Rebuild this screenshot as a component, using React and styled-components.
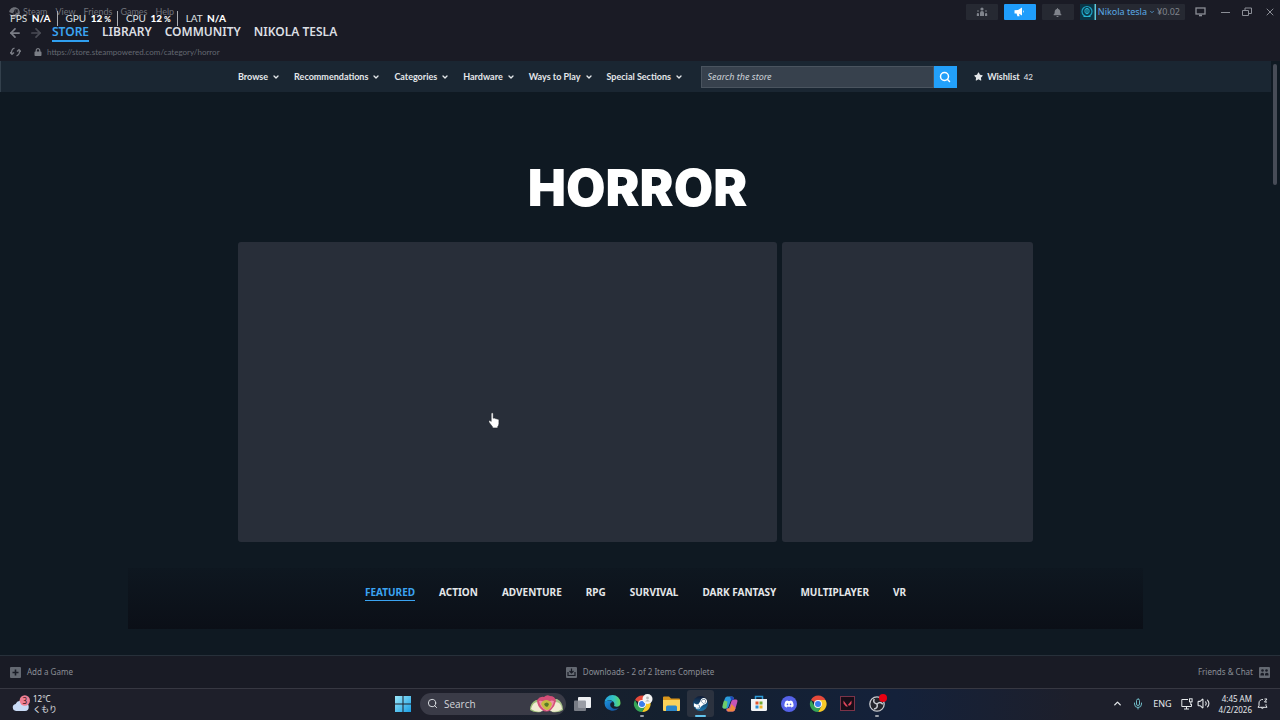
import React, { useState } from 'react';
import styled, { createGlobalStyle } from 'styled-components';
import { FaSteam, FaSteamSymbol, FaDiscord, FaStar, FaBell, FaBullhorn, FaLock } from 'react-icons/fa';
import { ArrowLeft, ArrowRight, ChevronDown, ChevronUp, Mic, Search, Volume2, X } from 'lucide-react';

const menus = ['Steam', 'View', 'Friends', 'Games', 'Help'];
const sections = ['STORE', 'LIBRARY', 'COMMUNITY', 'NIKOLA TESLA'];
const storeMenus = ['Browse', 'Recommendations', 'Categories', 'Hardware', 'Ways to Play', 'Special Sections'];
const tags = ['FEATURED', 'ACTION', 'ADVENTURE', 'RPG', 'SURVIVAL', 'DARK FANTASY', 'MULTIPLAYER', 'VR'];
const stats = [['FPS', 'N/A'], ['GPU', '12', '%'], ['CPU', '12', '%'], ['LAT', 'N/A']];

export default function App() {
  const [section, setSection] = useState('STORE');
  const [tag, setTag] = useState('FEATURED');
  const [query, setQuery] = useState('');

  return (
    <Page>
      <GlobalStyle />
      <Header>
        <TitleBar>
          <FaSteam size={11} />
          {menus.map(name => (
            <MenuButton key={name}>{name}</MenuButton>
          ))}
          <Account>
            <Chip aria-label="Friend activity"><PeopleIcon /></Chip>
            <Chip $active aria-label="Announcements"><MegaphoneIcon /></Chip>
            <Chip aria-label="Notifications"><FaBell size={9} /></Chip>
            <Profile>
              <Avatar />
              Nikola tesla
              <ChevronDown size={6} strokeWidth={3} />
              <span>¥0.02</span>
            </Profile>
          </Account>
          <WindowButtons>
            <IconButton aria-label="Big Picture"><DisplayIcon /></IconButton>
            <IconButton aria-label="Minimize"><MinimizeIcon /></IconButton>
            <IconButton aria-label="Restore"><RestoreIcon /></IconButton>
            <IconButton aria-label="Close"><X size={12} strokeWidth={2} /></IconButton>
          </WindowButtons>
        </TitleBar>
        <Sections>
          <IconButton aria-label="Back"><ArrowLeft size={14} strokeWidth={3} /></IconButton>
          <IconButton aria-label="Forward" $dim><ArrowRight size={14} strokeWidth={3} /></IconButton>
          {sections.map(name => (
            <SectionLink key={name} href="#" $active={name === section} onClick={() => setSection(name)}>
              {name}
            </SectionLink>
          ))}
        </Sections>
        <AddressBar>
          <IconButton aria-label="Reload"><ReloadIcon /></IconButton>
          <FaLock size={8} />
          <span>https://store.steampowered.com/category/horror</span>
        </AddressBar>
      </Header>

      <Store>
        <StoreBar>
          <StoreNav>
            <StoreMenus>
              {storeMenus.map(name => (
                <StoreMenu key={name}>
                  {name}
                  <ChevronDown size={8} strokeWidth={4} />
                </StoreMenu>
              ))}
            </StoreMenus>
            <SearchForm onSubmit={e => e.preventDefault()}>
              <input
                aria-label="Search the store"
                placeholder="Search the store"
                value={query}
                onChange={e => setQuery(e.target.value)}
              />
              <button aria-label="Search"><Search size={12} strokeWidth={3} /></button>
            </SearchForm>
            <Wishlist href="#">
              <FaStar size={9} />
              Wishlist <small>42</small>
            </Wishlist>
          </StoreNav>
        </StoreBar>
        <Title>HORROR</Title>
        <Capsules>
          <Capsule />
          <Capsule />
        </Capsules>
        <Tags>
          {tags.map(name => (
            <Tag key={name} $active={name === tag} onClick={() => setTag(name)}>{name}</Tag>
          ))}
        </Tags>
      </Store>
      <ScrollThumb />

      <Footer>
        <FooterButton><AddIcon />Add a Game</FooterButton>
        <FooterButton><DownloadIcon />Downloads - 2 of 2 Items Complete</FooterButton>
        <FooterButton>Friends &amp; Chat<ChatIcon /></FooterButton>
      </Footer>

      <Taskbar>
        <Weather>
          <WeatherIcon />
          <span>12°C<br />くもり</span>
        </Weather>
        <Apps>
          <AppButton aria-label="Start"><WindowsIcon /></AppButton>
          <TaskSearch>
            <Search size={11} />
            <input aria-label="Search Windows" placeholder="Search" />
            <LotusIcon />
          </TaskSearch>
          <AppButton aria-label="Task view"><TaskViewIcon /></AppButton>
          <AppButton aria-label="Edge"><EdgeIcon /></AppButton>
          <AppButton aria-label="Chrome profile" $running><ChromeIcon badge /></AppButton>
          <AppButton aria-label="File Explorer"><FolderIcon /></AppButton>
          <AppButton aria-label="Steam" $focused><SteamBall><FaSteamSymbol size={15} /></SteamBall></AppButton>
          <AppButton aria-label="Copilot"><CopilotIcon /></AppButton>
          <AppButton aria-label="Microsoft Store"><StoreIcon /></AppButton>
          <AppButton aria-label="Discord"><DiscordBall><FaDiscord size={10} /></DiscordBall></AppButton>
          <AppButton aria-label="Chrome"><ChromeIcon /></AppButton>
          <AppButton aria-label="Valorant"><ValorantIcon /></AppButton>
          <AppButton aria-label="OBS Studio" $running><ObsIcon /><RecordDot /></AppButton>
        </Apps>
        <Tray>
          <IconButton aria-label="Show hidden icons"><ChevronUp size={11} strokeWidth={3} /></IconButton>
          <MicButton aria-label="Microphone"><Mic size={12} /></MicButton>
          <span>ENG</span>
          <TrayGroup aria-label="Network and volume"><NetworkIcon /><Volume2 size={13} /></TrayGroup>
          <Clock>
            <time>4:45 AM<br />4/2/2026</time>
            <BellIcon />
          </Clock>
        </Tray>
      </Taskbar>

      <Stats>
        {stats.map(([name, value, unit]) => (
          <li key={name}>
            {name} <b>{value}{unit && <small> {unit}</small>}</b>
          </li>
        ))}
      </Stats>
      <Pointer />
    </Page>
  );
}

function PeopleIcon() {
  return (
    <svg width="12" height="10" viewBox="0 0 12 10" fill="currentColor">
      <circle cx="6" cy="2" r="1.6" />
      <path d="M4 9V6a2 2 0 0 1 4 0v3z" />
      <circle cx="2" cy="4" r=".8" />
      <circle cx="10" cy="4" r=".8" />
      <path d="M.8 9V7a1.100 1.100 0 0 1 2.200 0v2zM9 9V7a1.100 1.100 0 0 1 2.200 0v2z" />
    </svg>
  );
}

function MegaphoneIcon() {
  return (
    <svg width="11" height="10" viewBox="0 0 11 10" fill="currentColor">
      <path d="M.5 3.200 4 3l4-2.500v8L5 6.800l.6 2.400H3.400L2.600 6.500H.5z" />
      <path d="M9 3q1.600 1.500 0 3z" />
    </svg>
  );
}

function Avatar() {
  return (
    <svg width="16" height="16" viewBox="0 0 16 16" fill="none">
      <path fill="#0a3646" d="M0 0h14v16H0z" />
      <circle cx="7" cy="7.5" r="5" stroke="#1fa3c4" strokeWidth="1.2" />
      <path d="M5 5.5q2-2.5 4 0v3q-2 3-4 0zM7 5v5M3.500 12.500h7" stroke="#26b8d6" />
      <path fill="#57cbde" d="M14.500 0H16v16h-1.500z" />
    </svg>
  );
}

function DisplayIcon() {
  return (
    <svg width="11" height="10" viewBox="0 0 11 10" fill="none" stroke="currentColor">
      <rect x="1" y="1" width="9" height="6" strokeWidth="1.300" />
      <path d="M4 8.500h3" strokeWidth="1.600" />
    </svg>
  );
}

function MinimizeIcon() {
  return <svg width="9" height="9" viewBox="0 0 9 9" stroke="currentColor"><path d="M0 4.500h9" /></svg>;
}

function RestoreIcon() {
  return (
    <svg width="10" height="10" viewBox="0 0 10 10" fill="none" stroke="currentColor">
      <path d="M.5 3.500h6v5h-6zM3 3.500V1h6.500v5.500h-3" />
    </svg>
  );
}

function ReloadIcon() {
  return (
    <svg width="11" height="10" viewBox="0 0 11 10" fill="none" stroke="currentColor" strokeWidth="1.300">
      <path d="M4.500 1.200A4 4 0 0 0 1.800 6.500M6.500 8.800A4 4 0 0 0 9.200 3.500" />
      <path d="M0 5.200 2 7.400 4 5.500M7 4.500l2-1.900 2 2.200" />
    </svg>
  );
}

function AddIcon() {
  return (
    <svg width="11" height="11" viewBox="0 0 11 11">
      <rect width="11" height="11" rx="1" fill="#646972" />
      <path d="M5.500 2.500v6M2.500 5.500h6" stroke="#191c26" strokeWidth="1.600" />
    </svg>
  );
}

function DownloadIcon() {
  return (
    <svg width="11" height="11" viewBox="0 0 11 11" fill="none">
      <rect width="11" height="11" rx="1" fill="#646972" />
      <path d="M5.500 1.500v4M3.500 4l2 2 2-2M2 5v3.500h7V5" stroke="#191c26" strokeWidth="1.200" />
    </svg>
  );
}

function ChatIcon() {
  return (
    <svg width="11" height="11" viewBox="0 0 11 11">
      <rect width="11" height="11" rx="1" fill="#646972" />
      <g fill="#191c26">
        <circle cx="3.500" cy="3.500" r="1.300" />
        <circle cx="7.500" cy="3.500" r="1.300" />
        <path d="M1.500 8.500V6.800q2-2 3.500 0v1.700zM6 8.500V6.800q2-2 3.500 0v1.700z" />
      </g>
    </svg>
  );
}

function WeatherIcon() {
  return (
    <svg width="18" height="17" viewBox="0 0 18 17">
      <path d="M4 16a3.600 3.600 0 0 1-.4-7.100A5 5 0 0 1 12.500 8a4 4 0 0 1 .5 8z" fill="#c9daf5" />
      <circle cx="12.800" cy="5.500" r="5.200" fill="#ee7f94" />
      <text x="12.800" y="8.500" textAnchor="middle" fontSize="8" fill="#3a1620">3</text>
    </svg>
  );
}

function WindowsIcon() {
  return (
    <svg width="16" height="16" viewBox="0 0 16 16">
      <defs>
        <linearGradient id="win" x2="1" y2="1">
          <stop stopColor="#9be7fa" />
          <stop offset="1" stopColor="#1a9fe4" />
        </linearGradient>
      </defs>
      <path fill="url(#win)" d="M0 0h7.500v7.500H0zM8.500 0H16v7.500H8.500zM0 8.500h7.500V16H0zM8.500 8.500H16V16H8.500z" />
    </svg>
  );
}

function LotusIcon() {
  return (
    <svg width="33" height="18" viewBox="0 0 33 18">
      <path d="M0 15Q0 8 6 5q4 0 6 3l-1 9Q4 18 0 15z" fill="#9cbf78" />
      <path d="M33 15Q33 7 27 4q-5 0-7 4l2 9q7 1 11-2z" fill="#a8c48a" />
      <path d="M1 14q2-8 8-7l4 9q-7 2-12-2zM32 14q-1-8-8-7l-4 9q7 2 12-2z" fill="#f1ecd2" />
      <path d="M7 5q3-4 7-3 3-3 6-1 5 0 6 5-1 5-5 9-5 3-9 0-5-4-5-10z" fill="#d44f78" />
      <path d="M9 6q4-1 7 3 4-5 8-3-1 7-7 10Q10 13 9 6z" fill="#f08ea8" />
      <path d="M11 9q1-4 6-4 4 1 5 4-2 6-5 6-4-1-6-6z" fill="#c5be42" />
      <path d="M14 9q3-3 5 0-1 3-2 3-2 0-3-3z" fill="#587a28" />
    </svg>
  );
}

function TaskViewIcon() {
  return (
    <svg width="17" height="16" viewBox="0 0 17 16">
      <rect x="4" y="1" width="13" height="11" rx="1" fill="#eef0f3" />
      <rect y="4.500" width="12" height="10.500" rx="1" fill="#8b8e96" opacity="0.850" />
    </svg>
  );
}

function EdgeIcon() {
  return (
    <svg width="17" height="17" viewBox="0 0 17 17">
      <defs>
        <linearGradient id="edgeTop" x2="1">
          <stop stopColor="#249fdf" />
          <stop offset="0.600" stopColor="#35c5c0" />
          <stop offset="1" stopColor="#62d85d" />
        </linearGradient>
        <linearGradient id="edgeLow" x2="1" y2="1">
          <stop stopColor="#1c93e0" />
          <stop offset="1" stopColor="#114b97" />
        </linearGradient>
      </defs>
      <path d="M.5 8A8 8 0 0 1 16.500 8c.2 3-3 4.500-6 3.200-.8-.4-.2-.8-.1-1.800C10.600 5 3 3.500.5 8z" fill="url(#edgeTop)" />
      <path d="M.5 8c1.600-3.300 6.500-3.200 8.600-1C6 7 5.500 10 7 12c2 2.300 5.500 2.300 8 .8A8.200 8.200 0 0 1 .5 8z" fill="url(#edgeLow)" />
    </svg>
  );
}

function ChromeIcon({ badge }) {
  return (
    <svg width="22" height="20" viewBox="-2 -1 22 20">
      <path d="M9 9 2 5a8 8 0 0 1 14.500 0z" fill="#e5493a" />
      <path d="M9 9V5h7.500A8 8 0 0 1 9 17l3.500-6z" fill="#f7c927" />
      <path d="m9 9 3.400 2L9 17A8 8 0 0 1 2 5l3.500 6z" fill="#35a456" />
      <circle cx="9" cy="9" r="4" fill="#f4f6f8" />
      <circle cx="9" cy="9" r="3" fill="#3b7ded" />
      {badge && (
        <>
          <circle cx="14.500" cy="4" r="5" fill="#f4f4f4" />
          <circle cx="14.500" cy="3" r="1.400" fill="#b9b9b9" />
          <path d="M12 6.500q2.500-3 5 0z" fill="#b9b9b9" />
        </>
      )}
    </svg>
  );
}

function FolderIcon() {
  return (
    <svg width="17" height="16" viewBox="0 0 17 16">
      <path d="M0 1.500Q0 .5 1 .5h5l2 2h8q1 0 1 1V8H0z" fill="#d9961c" />
      <path d="M0 4h17v10q0 1-1 1H1q-1 0-1-1z" fill="#fbd25a" />
      <path d="M3 11q0-1.500 1.500-1.500h8Q14 9.500 14 11v4H3z" fill="#2b86c9" />
    </svg>
  );
}

function CopilotIcon() {
  return (
    <svg width="16" height="16" viewBox="0 0 16 16">
      <path d="M5 .5h5q1.500 0 2 2L9 4 6.500 11q-.6 1.500-2 1.500H2Q0 12.500.7 10l2-7Q3.400.5 5 .5z" fill="#2a9bdc" />
      <path d="M.8 8.500 2 4.500l3.500 1L4.500 12.500H2Q0 12.500.8 8.500z" fill="#6ecb6a" />
      <path d="M11.500 3.500H14q2 0 1.300 2.500l-2 7q-.6 2.500-2.300 2.500H6q-1.500 0-2-2L7 12l2.500-7q.6-1.500 2-1.500z" fill="#c754b5" />
      <path d="M5 12.500h3L9.500 8l4 4-.5 1.500q-.6 2-2.300 2H6q-1 0-1-3z" fill="#f0883e" />
      <path d="M8 .5h2q1.500 0 2 3-2 0-2.500 1.500z" fill="#2345b8" />
    </svg>
  );
}

function StoreIcon() {
  return (
    <svg width="16" height="17" viewBox="0 0 16 17">
      <path d="M4.500 5V1.500h7V5" fill="none" stroke="#2d9bd8" strokeWidth="1.500" />
      <path d="M0 4h16v10.500Q16 16 14.500 16h-13Q0 16 0 14.500z" fill="#f1f3f5" />
      <path d="M4.500 6.500h3v3h-3z" fill="#e2562d" />
      <path d="M8.500 6.500h3v3h-3z" fill="#73a932" />
      <path d="M4.500 10.500h3v3h-3z" fill="#2d8fd3" />
      <path d="M8.500 10.500h3v3h-3z" fill="#eeb32b" />
    </svg>
  );
}

function ValorantIcon() {
  return (
    <svg width="15" height="15" viewBox="0 0 15 15">
      <rect x=".5" y=".5" width="14" height="14" fill="#180d18" stroke="#7c3348" />
      <path d="M3.500 4.500 8 10.500H6L3.500 7.500zM11.500 4.500v3L10 9.500H8.500L8 8.800z" fill="#e0455a" />
    </svg>
  );
}

function ObsIcon() {
  return (
    <svg width="16" height="16" viewBox="0 0 16 16" fill="none">
      <circle cx="8" cy="8" r="7.2" fill="#25262c" stroke="#c9cbd0" strokeWidth="1.300" />
      <g stroke="#c9cbd0" strokeWidth="1.500">
        <path d="M8 8Q3.500 7 5.200 3" />
        <path d="M8 8q3.200-3.300 5.800.2" />
        <path d="M8 8q1.300 4.300-3 5" />
      </g>
    </svg>
  );
}

function NetworkIcon() {
  return (
    <svg width="12" height="12" viewBox="0 0 12 12" fill="none" stroke="currentColor">
      <path d="M7 1.500H.8v7h9.700V6M3 11h5M5.500 8.500V11" />
      <rect x="8.500" y=".8" width="2.600" height="3" />
      <path d="M9.800 4v3" />
    </svg>
  );
}

function BellIcon() {
  return (
    <svg width="11" height="12" viewBox="0 0 11 12" fill="none" stroke="currentColor">
      <path d="M6 1.500a3.500 3.500 0 0 0-4 3.500v2.500L1 9.300h9L9 7.500V6.300M4 9.500q1.300 2 2.800 0M7.500 1h2.500L7.500 4h2.500" />
    </svg>
  );
}

function Pointer() {
  return (
    <Cursor width="12" height="17" viewBox="0 0 12 17">
      <path
        d="M3.200 9.500V1.800q0-1.100 1-1.100t1 1.100v4.400q1.500-.5 1.900.4 1.300-.4 1.700.5 1.900-.4 2.100 1.200v3.200q0 2-1.200 3.200v1.200H4.600v-1L1.200 10.500Q.4 9.200 1.300 8.600q.9-.3 1.900.9z"
        fill="#fff"
        stroke="#171a20"
        strokeWidth=".5"
      />
    </Cursor>
  );
}

const GlobalStyle = createGlobalStyle`
  * {
    box-sizing: border-box;
  }

  body {
    margin: 0;
    background: #0f1922;
    color: #e4e7ea;
    font: 9px/12px 'Noto Sans', 'Noto Sans CJK JP', sans-serif;
  }

  button, input {
    margin: 0;
    padding: 0;
    border: 0;
    background: none;
    color: inherit;
    font: inherit;
  }

  a {
    color: inherit;
    text-decoration: none;
  }

  svg {
    display: block;
    flex: none;
  }
`;

const Page = styled.div`
  position: relative;
  display: flex;
  flex-direction: column;
  min-height: 100vh;
`;

const Header = styled.header`
  background: #1a1b25;
`;

const TitleBar = styled.div`
  display: flex;
  align-items: center;
  height: 24px;
  padding: 0 4px 0 9px;
  gap: 3px;
  color: #6d7078;
`;

const MenuButton = styled.button`
  margin-right: 5px;
  font-family: Lato, sans-serif;
`;

const Account = styled.div`
  display: flex;
  gap: 6px;
  margin-left: auto;
`;

const Chip = styled.button`
  display: flex;
  align-items: center;
  justify-content: center;
  width: 32px;
  height: 16px;
  border-radius: 1px;
  background: ${props => (props.$active ? '#1f9dfb' : '#262932')};
  color: ${props => (props.$active ? '#fff' : '#80848c')};
`;

const Profile = styled.button`
  display: flex;
  align-items: center;
  gap: 2px;
  height: 16px;
  padding-right: 5px;
  border-radius: 1px;
  background: #262932;
  color: #5aa9e6;

  span {
    color: #80848c;
  }
`;

const WindowButtons = styled.div`
  display: flex;
  gap: 12px;
  margin-left: 7px;
  color: #8b8e96;

  button:first-child {
    margin-right: 3px;
  }
`;

const IconButton = styled.button`
  display: flex;
  align-items: center;
  opacity: ${props => (props.$dim ? 0.5 : 1)};
`;

const Sections = styled.nav`
  display: flex;
  gap: 13px;
  height: 18px;
  padding-left: 8px;
  color: #7b7e86;

  button + button {
    margin: 0 -4px 0 -6px;
  }
`;

const SectionLink = styled.a`
  border-bottom: 2px solid ${props => (props.$active ? '#2f9ff0' : 'transparent')};
  color: ${props => (props.$active ? '#3ba4f2' : '#dcdfe3')};
  font-size: 12px;
  font-weight: 600;
  line-height: 16px;
`;

const AddressBar = styled.div`
  display: flex;
  align-items: center;
  height: 19px;
  padding-left: 10px;
  color: #7b7e86;
  font-family: Lato, sans-serif;
  font-size: 8px;

  button {
    margin-right: 13px;
  }

  span {
    margin-left: 5px;
    color: #646871;
  }
`;

const Store = styled.main`
  flex: 1;
  margin-right: 9px;
`;

const StoreBar = styled.div`
  background: #1a2632;
  box-shadow: inset 1px 0 #33404c;
`;

const StoreNav = styled.nav`
  display: flex;
  align-items: center;
  justify-content: space-between;
  max-width: 795px;
  height: 31px;
  margin: 0 auto;
  font-family: Lato, sans-serif;
  font-weight: 700;
`;

const StoreMenus = styled.div`
  display: flex;
  gap: 14px;
`;

const StoreMenu = styled.button`
  display: flex;
  align-items: center;
  gap: 4px;
`;

const SearchForm = styled.form`
  display: flex;
  width: 256px;
  height: 22px;

  input {
    flex: 1;
    min-width: 0;
    padding: 0 6px;
    border: 1px solid #4a545f;
    background: #37414d;
    font: italic 9px 'Noto Sans', sans-serif;
  }

  input::placeholder {
    color: #cdd2d7;
    opacity: 1;
  }

  button {
    display: flex;
    align-items: center;
    justify-content: center;
    width: 23px;
    background: #22a0fa;
    color: #fff;
  }
`;

const Wishlist = styled.a`
  display: flex;
  align-items: center;
  gap: 4px;

  small {
    font-size: 8px;
    font-weight: 400;
  }
`;

const Title = styled.h1`
  margin: 64px 0 23px;
  padding-left: 4px;
  color: #fff;
  font-family: Inter, sans-serif;
  font-size: 51px;
  font-weight: 900;
  line-height: 63px;
  text-align: center;
`;

const Capsules = styled.div`
  display: grid;
  grid-template-columns: 539fr 251fr;
  gap: 5px;
  max-width: 795px;
  margin: 0 auto;
`;

const Capsule = styled.div`
  height: 300px;
  border-radius: 3px;
  background: #282e39;
`;

const Tags = styled.div`
  display: flex;
  justify-content: center;
  gap: 24px;
  max-width: 1015px;
  height: 61px;
  margin: 26px auto;
  padding-top: 17px;
  background: linear-gradient(#0e1720, #0b0f17);
`;

const Tag = styled.button`
  align-self: flex-start;
  padding-bottom: 1px;
  border-bottom: 1px solid ${props => (props.$active ? '#3ba4f2' : 'transparent')};
  color: ${props => (props.$active ? '#3ba4f2' : '#e4e7ea')};
  font-size: 10px;
  font-weight: 700;
  line-height: 14px;
`;

const ScrollThumb = styled.div`
  position: absolute;
  top: 64px;
  right: 3px;
  width: 4px;
  height: 121px;
  border-radius: 2px;
  background: #474c57;
`;

const Footer = styled.footer`
  display: grid;
  grid-template-columns: 1fr auto 1fr;
  align-items: center;
  height: 33px;
  padding: 0 10px;
  border-top: 1px solid #27303a;
  background: #191b25;
  color: #8a8e96;
  font-size: 8px;
`;

const FooterButton = styled.button`
  display: flex;
  align-items: center;
  gap: 6px;

  &:last-child {
    justify-self: end;
  }
`;

const Taskbar = styled.footer`
  display: grid;
  grid-template-columns: 1fr 501px 1fr;
  height: 32px;
  padding: 0 12px 2px 12px;
  border-top: 1px solid #373842;
  background: linear-gradient(90deg, #1e1f2a 35%, #14202f 52%, #14213a 70%, #1d1f2b 84%);
`;

const Weather = styled.button`
  display: flex;
  align-items: center;
  gap: 3px;
  font-size: 8px;
  line-height: 10px;
  text-align: left;
`;

const Apps = styled.div`
  display: flex;
  align-items: center;
  justify-content: space-between;
`;

const AppButton = styled.button`
  position: relative;
  display: flex;
  align-items: center;
  justify-content: center;
  width: 27px;
  height: 27px;
  border-radius: 3px;
  background: ${props => (props.$focused ? '#2b323f' : 'none')};

  &::after {
    content: '';
    position: absolute;
    bottom: 0;
    width: ${props => (props.$focused ? '11px' : '4px')};
    height: 2px;
    border-radius: 1px;
    background: ${props => (props.$focused ? '#62c4ee' : props.$running ? '#9a9fa8' : 'none')};
  }
`;

const TaskSearch = styled.label`
  display: flex;
  align-items: center;
  width: 146px;
  height: 22px;
  margin: 0 1px;
  padding: 0 3px 0 7px;
  border-radius: 11px;
  background: #3a3b47;

  input {
    flex: 1;
    min-width: 0;
    margin-left: 6px;
    font: 10px 'Open Sans', sans-serif;
  }

  input::placeholder {
    color: #d4d6db;
    opacity: 1;
  }
`;

const SteamBall = styled.span`
  border-radius: 50%;
  background: linear-gradient(#101a34, #1a78b0);
  color: #fff;
`;

const DiscordBall = styled.span`
  padding: 3px;
  border-radius: 50%;
  background: #5562e8;
  color: #fff;
`;

const RecordDot = styled.span`
  position: absolute;
  top: 4px;
  right: 3px;
  width: 8px;
  height: 8px;
  border-radius: 50%;
  background: #e80012;
`;

const Tray = styled.div`
  display: flex;
  align-items: center;
  justify-content: flex-end;
  gap: 9px;
`;

const MicButton = styled(IconButton)`
  color: #6fb9c4;
`;

const TrayGroup = styled(IconButton)`
  gap: 4px;
`;

const Clock = styled.button`
  display: flex;
  align-items: center;
  gap: 5px;
  font-size: 8px;
  line-height: 11px;
  text-align: right;
`;

const Stats = styled.ul`
  position: absolute;
  top: 11px;
  left: 10px;
  display: flex;
  margin: 0;
  padding: 0;
  list-style: none;
  color: #dfe1e4;
  font-family: Lato, sans-serif;
  font-size: 10px;
  line-height: 14px;

  li + li {
    margin-left: 6px;
    padding-left: 8px;
    border-left: 1px solid #a9abb0;
  }

  b {
    margin-left: 2px;
    color: #fff;
    font-weight: 900;
  }

  small {
    font-size: 8px;
  }
`;

const Cursor = styled.svg`
  position: absolute;
  top: 412px;
  left: 488px;
`;
